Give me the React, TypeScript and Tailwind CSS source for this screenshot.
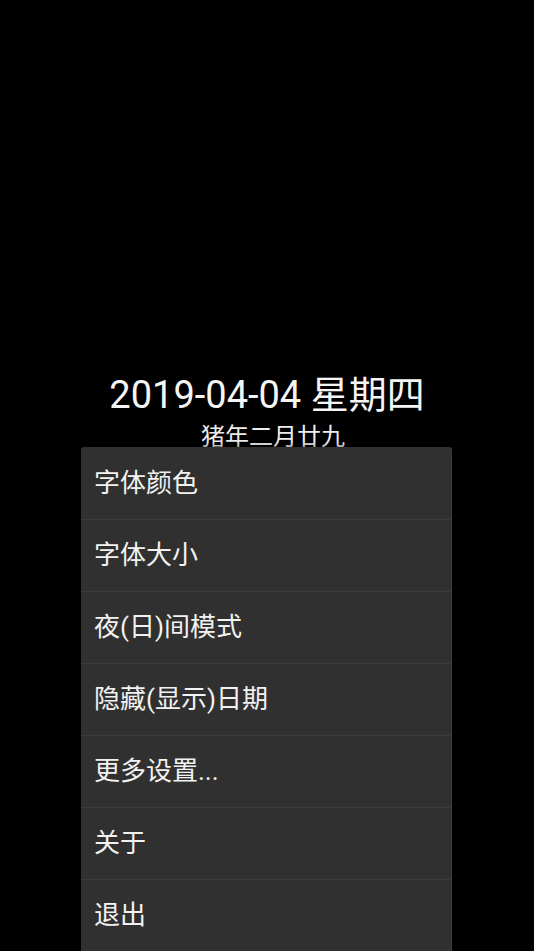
const items = ['字体颜色', '字体大小', '夜(日)间模式', '隐藏(显示)日期', '更多设置...', '关于', '退出']

export default function App() {
  return (
    <div className="relative h-[951px] w-full overflow-hidden bg-black font-['Roboto','Noto_Sans_CJK_SC',sans-serif] text-white">
      {/* clock */}
      <div className="flex flex-col items-center pt-[373px]">
        <div className="text-[38px] leading-[44px] text-[#f5f5f5]">2019-04-04 星期四</div>
        <div className="mt-[5px] pl-[12px] text-[24px] leading-[30px] text-[#ececec]">猪年二月廿九</div>
      </div>

      {/* popup menu */}
      <div className="absolute left-[81px] top-[447px] w-[371px] rounded-t-[3px] border-r border-[#3c3c3c] bg-[#303030] shadow-[0_0_6px_rgba(0,0,0,0.6)]">
        {items.map((label, i) => (
          <div
            key={label}
            className={`flex h-[72px] items-center pl-[13px] text-[26px] text-[#f2f2f2] ${i > 0 ? 'border-t border-[#3c3c3c]' : ''}`}
          >
            {label}
          </div>
        ))}
      </div>
    </div>
  )
}
